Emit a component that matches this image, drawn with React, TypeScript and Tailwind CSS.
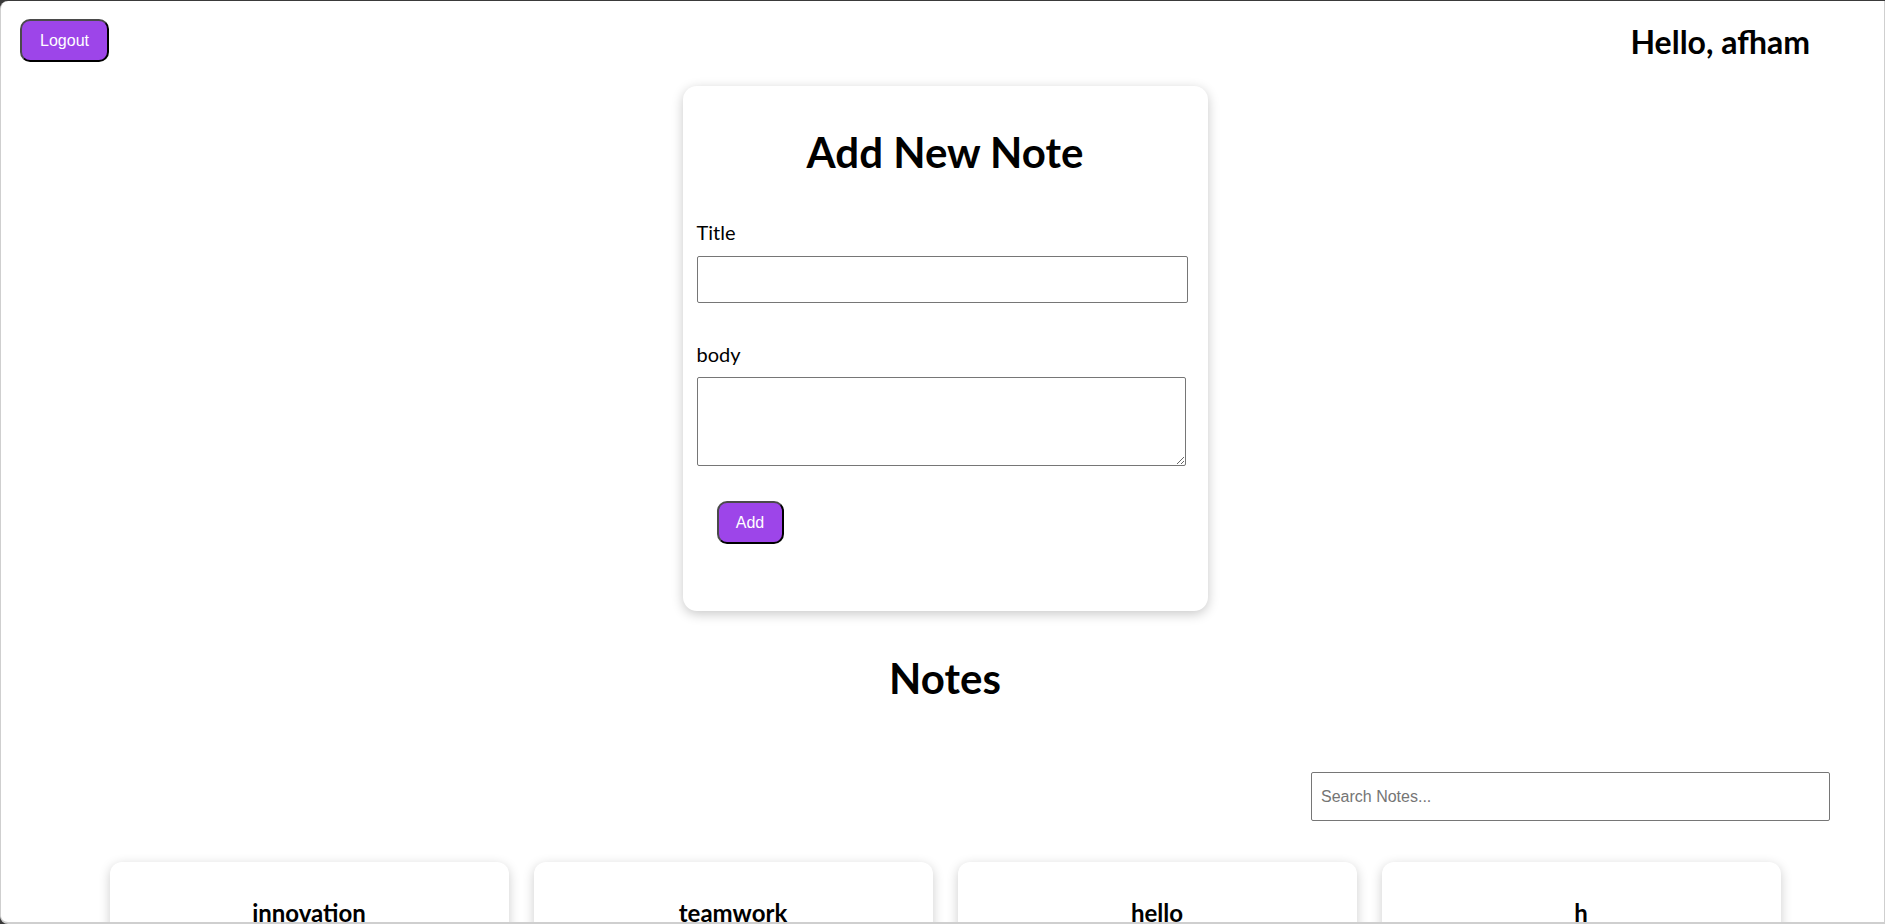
const notes = ['innovation', 'teamwork', 'hello', 'h']

const heading = "font-['Lato','Noto_Sans',sans-serif]"
const btn =
  "h-[43px] rounded-[10px] border-2 border-[#4a4a4a] border-b-black border-r-black bg-[#9d45e9] text-[16px] text-white font-['Liberation_Sans',Arial,sans-serif]"

export default function App() {
  return (
    <div className="h-screen bg-[#3a3a3a] pt-px">
      <div className="h-full overflow-hidden rounded-l-[8px] border-l border-r border-b-2 border-[#cfcfcf] bg-white text-black">
        {/* top bar */}
        <div className="flex items-start justify-between pl-[19px] pr-[74px] pt-[18px]">
          <button className={`${btn} w-[89px]`}>Logout</button>
          <h2 className={`${heading} mt-[7px] text-[32px] font-bold leading-[32px]`}>Hello, afham</h2>
        </div>

        <div className="pl-[5px]">
          {/* add note form */}
          <div className="mx-auto mt-[24px] w-[525px] rounded-[14px] bg-white px-[14px] pb-[67px] pt-[45px] shadow-[0_3px_12px_rgba(0,0,0,0.22)]">
            <h1 className={`${heading} text-center text-[42px] font-bold leading-[42px]`}>Add New Note</h1>
            <label className={`${heading} mt-[49px] block text-[20px] leading-[20px]`}>Title</label>
            <input type="text" className="mt-[14px] block h-[47px] w-[491px] rounded-[2px] border border-[#767676] bg-white" />
            <label className={`${heading} mt-[41px] block text-[20px] leading-[20px]`}>body</label>
            <textarea className="mt-[13px] block h-[89px] w-[489px] rounded-[2px] border border-[#767676] bg-white" />
            <button className={`${btn} ml-[20px] mt-[35px] w-[67px]`}>Add</button>
          </div>

          <h1 className={`${heading} mt-[46px] text-center text-[42px] font-bold leading-[42px]`}>Notes</h1>
        </div>

        {/* search */}
        <div className="mt-[73px] flex justify-end pr-[54px]">
          <input
            type="text"
            placeholder="Search Notes..."
            className="h-[49px] w-[519px] rounded-[2px] border border-[#767676] bg-white pl-[9px] text-[16px] font-['Liberation_Sans',Arial,sans-serif] placeholder:text-[#757575]"
          />
        </div>

        {/* note cards */}
        <div className="mt-[41px] flex justify-center gap-[25px] pl-[5px]">
          {notes.map((n) => (
            <div key={n} className="h-[200px] w-[399px] rounded-[12px] bg-white pt-[41px] shadow-[0_3px_12px_rgba(0,0,0,0.2)]">
              <h3 className={`${heading} text-center text-[24px] font-bold leading-[20px]`}>{n}</h3>
            </div>
          ))}
        </div>
      </div>
    </div>
  )
}
